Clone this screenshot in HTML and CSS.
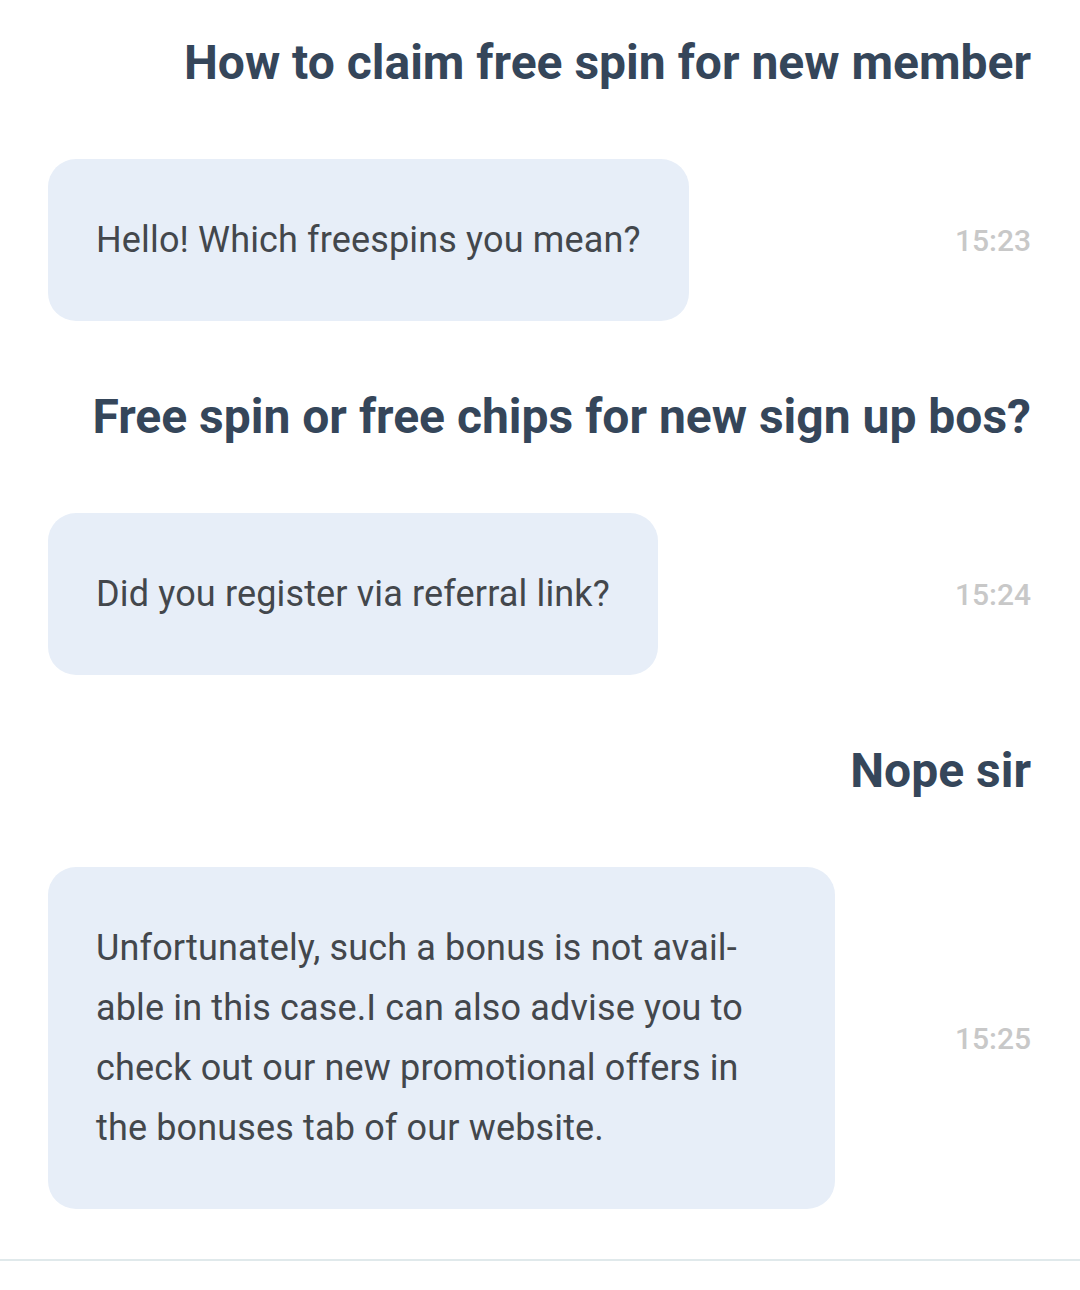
FILE: index.html
```html
<!DOCTYPE html>
<html lang="en">
<head>
    <meta charset="UTF-8">
    <meta name="viewport" content="width=device-width, initial-scale=1.0">
    <title>Chat</title>
    <link rel="stylesheet" href="styles.css">
</head>
<body>
    <div class="chat">
        <div class="question">How to claim free spin for new member</div>

        <div class="answer-row">
            <div class="bubble">Hello! Which freespins you mean?</div>
            <span class="time">15:23</span>
        </div>

        <div class="question">Free spin or free chips for new sign up bos?</div>

        <div class="answer-row">
            <div class="bubble">Did you register via referral link?</div>
            <span class="time">15:24</span>
        </div>

        <div class="question">Nope sir</div>

        <div class="answer-row">
            <div class="bubble">Unfortunately, such a bonus is not avail&shy;able in this case.I can also advise you to check out our new promotional offers in the bonuses tab of our website.</div>
            <span class="time">15:25</span>
        </div>
    </div>
    <div class="divider"></div>
</body>
</html>
```

FILE: styles.css
```css
body {
    font-family: Roboto, "Noto Sans", Arial, sans-serif;
    margin: 0;
    padding: 0;
    background-color: #fff;
}

.chat {
    display: flex;
    flex-direction: column;
    gap: 64px;
    padding: 31px 49px 0 48px;
    height: 1259px;
    box-sizing: border-box;
}

.question {
    text-align: right;
    font-size: 48px;
    font-weight: 700;
    line-height: 64px;
    color: #35465a;
}

.answer-row {
    display: flex;
    align-items: center;
    justify-content: space-between;
}

.bubble {
    max-width: 691px;
    padding: 51px 48px;
    background-color: #e7eef8;
    border-radius: 28px;
    font-size: 36px;
    line-height: 60px;
    letter-spacing: 0.15px;
    color: #43474c;
}

.time {
    font-size: 30px;
    font-weight: 500;
    color: #c8c8c8;
}

.divider {
    height: 2px;
    background-color: #e0e9eb;
}
```
